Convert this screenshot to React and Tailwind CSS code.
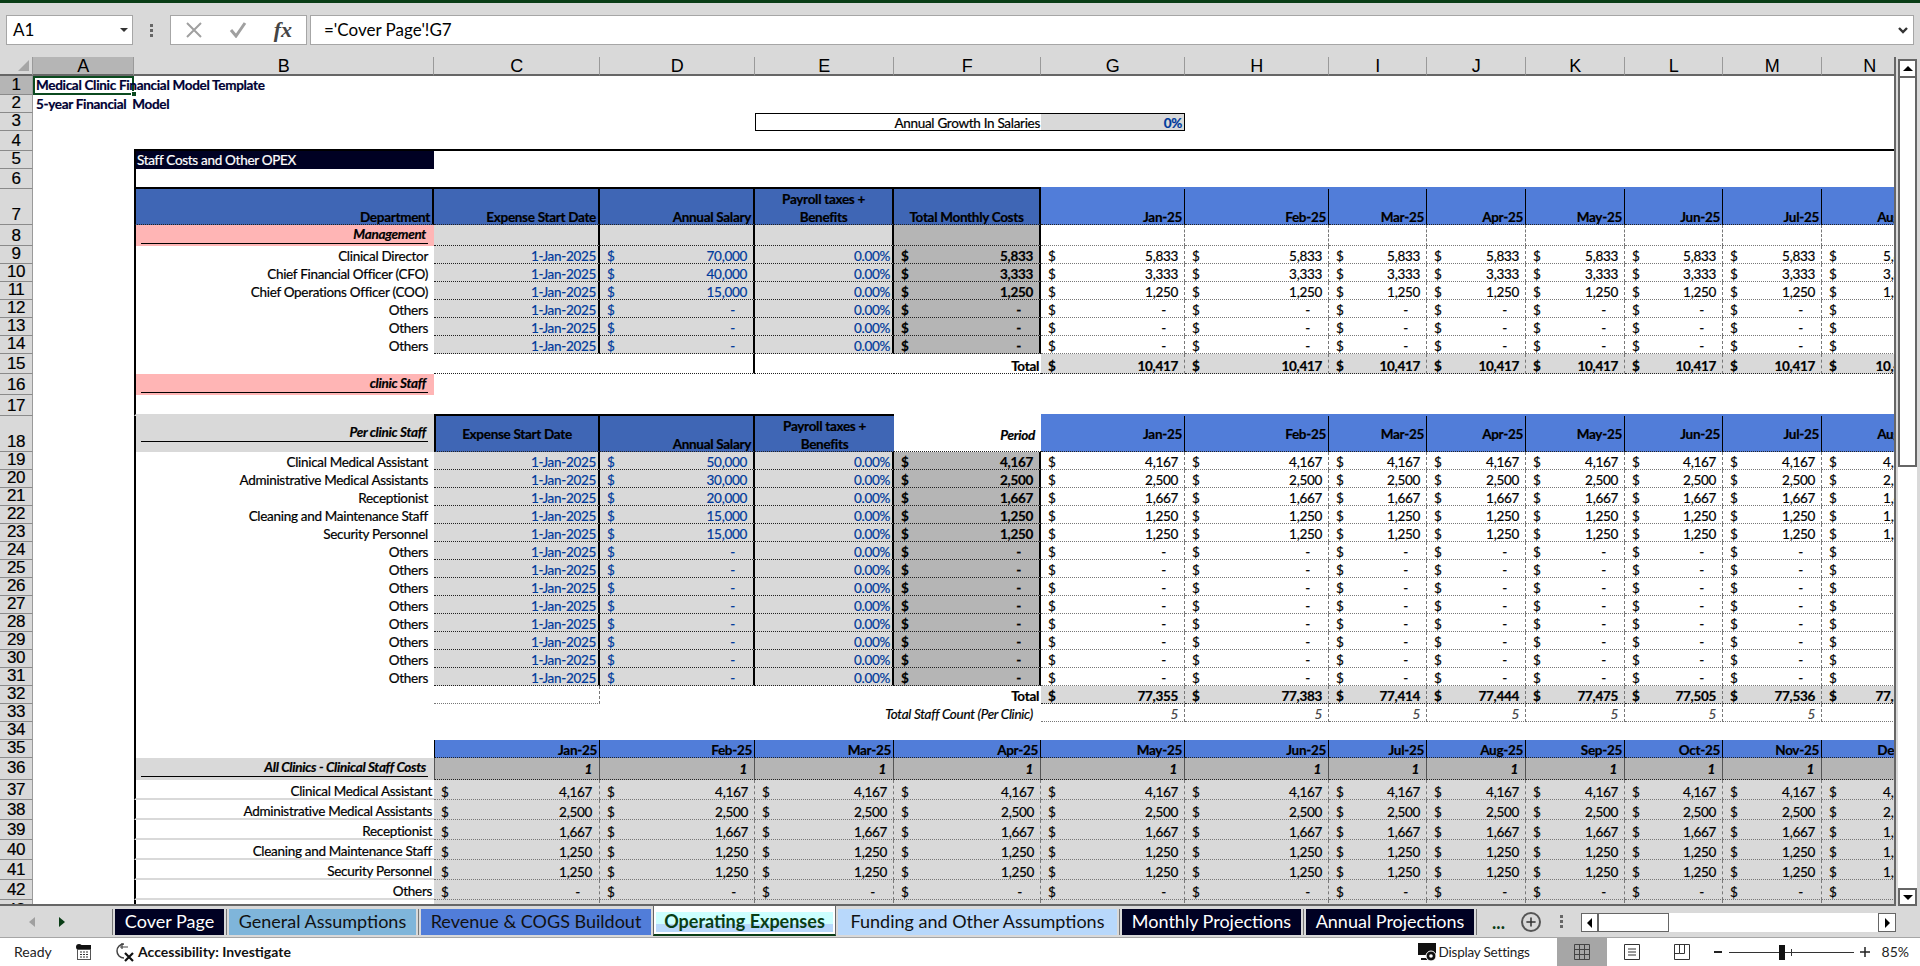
import React from 'react'
import { Plus } from 'lucide-react'

const COLS = ['w-[101px]', 'w-[300px]', 'w-[166px]', 'w-[155px]', 'w-[139px]', 'w-[147px]', 'w-[144px]', 'w-[144px]', 'w-[98px]', 'w-[99px]', 'w-[99px]', 'w-[98px]', 'w-[99px]', 'w-[101px]']
const LETTERS = 'ABCDEFGHIJKLMN'.split('')
const MONTHS = ['Jan-25', 'Feb-25', 'Mar-25', 'Apr-25', 'May-25', 'Jun-25', 'Jul-25', 'Aug-25']
const YEAR = ['Jan-25', 'Feb-25', 'Mar-25', 'Apr-25', 'May-25', 'Jun-25', 'Jul-25', 'Aug-25', 'Sep-25', 'Oct-25', 'Nov-25', 'Dec-25']
const GRID = [6, 7, 8, 9, 10, 11, 12, 13]

const BLUE = 'bg-[#3f66b5]'
const LIGHT = 'bg-[#517dd9]'
const GRAY = 'bg-[#d9d9d9]'
const DARK = 'bg-[#b5b5b5]'
const PINK = 'bg-[#ffb5b5]'
const DOT = 'border-b [border-bottom-style:dotted]! border-b-[#222]'
const DOT2 = 'border-b [border-bottom-style:dotted]! border-b-[#777]'
const DASH = 'border-r [border-right-style:dashed]! border-r-[#777]'
const THICK = 'border-r-2 border-r-black'
const INPUT = 'text-[#003a9b]'
const HEADFONT = "font-['Liberation_Sans',sans-serif] tracking-[-0.5px]"
const S1 = 'translate-y-[1px]'
const S2 = 'translate-y-[2px]'

const Cell = ({ col, className = '', children }) => (
    <div className={`${COLS[col]} shrink-0 box-border flex whitespace-nowrap ${className}`}>{children}</div>
)

const Row = ({ n, h, sel, num = 'items-end pb-[1px]', children }) => (
    <div className={`flex w-max shrink-0 ${h}`}>
        <div className={`w-[33px] shrink-0 box-border border-b border-b-[#8a8a8a] border-r border-r-[#9a9a9a] flex justify-center text-[17px] leading-none ${num} ${HEADFONT} ${sel ? DARK : GRAY}`}>{n}</div>
        <Cell col={0} className={sel ? 'relative' : ''}>
            {sel && <div className="absolute inset-0 border-2 border-[#0b4a1f]"></div>}
            {sel && <div className="absolute right-[-3px] bottom-[-2px] w-[6px] h-[6px] bg-[#0b4a1f] border border-white z-10"></div>}
            {children && children[0]}
        </Cell>
        {children && children.slice(1)}
    </div>
)

const Money = ({ v, bold, cls = '', shift = S1 }) => (
    <div className={`flex-1 flex justify-between items-center pl-[7px] ${shift} ${bold ? 'font-bold' : ''} ${cls}`}>
        <span>$</span>
        <span className={v === '-' ? 'pr-[18px]' : 'pr-[6px]'}>{v}</span>
    </div>
)

const Right = ({ children, className = '', pr = 'pr-[6px]', shift = S1 }) => (
    <div className={`flex-1 min-w-0 flex justify-end ${shift} ${pr} ${className}`}>{children}</div>
)

const SubHead = ({ text, h = 'h-[19px]', pr = 'pr-[2px]' }) => (
    <div className={`ml-[5px] mr-[6px] flex-1 ${h} flex items-end justify-end border-b border-b-black font-bold italic ${pr}`}>{text}</div>
)

const BLeft = 'border-l-2 border-l-black'

const InputRow = ({ n, label, salary, monthly }) => (
    <Row n={n} h="h-[18px]">
        {[
            null,
            <Cell key="b" col={1} className={BLeft}><Right>{label}</Right></Cell>,
            <Cell key="c" col={2} className={`${GRAY} ${DOT} ${THICK}`}><Right pr="pr-[2px]" className={INPUT}>1-Jan-2025</Right></Cell>,
            <Cell key="d" col={3} className={`${GRAY} ${DOT} ${THICK}`}><Money v={salary} cls={INPUT} /></Cell>,
            <Cell key="e" col={4} className={`${GRAY} ${DOT} ${THICK}`}><Right pr="pr-[2px]" className={INPUT}>0.00%</Right></Cell>,
            <Cell key="f" col={5} className={`${DARK} ${DOT} ${THICK}`}><Money v={monthly} bold /></Cell>,
            ...GRID.map(c => <Cell key={c} col={c} className={`${DOT2} ${DASH}`}><Money v={monthly} /></Cell>),
        ]}
    </Row>
)

const ClinicRow = ({ n, label, v, h = 'h-[20px]' }) => (
    <Row n={n} h={h}>
        {[
            null,
            <Cell key="b" col={1} className={`${BLeft} border-b-2 border-b-[#d9d9d9]`}><Right pr="pr-[2px]" shift={S2}>{label}</Right></Cell>,
            ...YEAR.map((m, i) => <Cell key={m} col={i + 2} className={`${GRAY} ${DOT2} ${DASH}`}><Money v={v} shift={S2} cls={i === 0 ? 'pr-[1px]' : ''} /></Cell>),
        ]}
    </Row>
)

const Sep = () => <div className="w-[1px] mx-[2px] h-[26px] mt-[3px] bg-[#777] shrink-0"></div>

const Tab = ({ w, bg, color, children }) => (
    <div className={`${w} ${bg} ${color} h-[26px] mt-[3px] pb-[3px] shrink-0 flex items-center justify-center text-[18px] leading-none whitespace-nowrap`}>{children}</div>
)

const staff = [
    ['Clinical Medical Assistant', '50,000', '4,167'],
    ['Administrative Medical Assistants', '30,000', '2,500'],
    ['Receptionist', '20,000', '1,667'],
    ['Cleaning and Maintenance Staff', '15,000', '1,250'],
    ['Security Personnel', '15,000', '1,250'],
    ['Others', '-', '-'], ['Others', '-', '-'], ['Others', '-', '-'], ['Others', '-', '-'],
    ['Others', '-', '-'], ['Others', '-', '-'], ['Others', '-', '-'], ['Others', '-', '-'],
]

const management = [
    ['Clinical Director', '70,000', '5,833'],
    ['Chief Financial Officer (CFO)', '40,000', '3,333'],
    ['Chief Operations Officer (COO)', '15,000', '1,250'],
    ['Others', '-', '-'], ['Others', '-', '-'], ['Others', '-', '-'],
]

const totals = ['77,355', '77,383', '77,414', '77,444', '77,475', '77,505', '77,536', '77,566']

const App = () => {
    return (
        <div className="w-[1920px] h-[966px] flex flex-col overflow-hidden bg-[#d9d9d9] text-[13.5px] tracking-[-0.3px] leading-[18px] text-black font-['Lato','Liberation_Sans',sans-serif]">
            <div className="h-[3px] bg-[#0a3d16] shrink-0"></div>

            {/* formula bar */}
            <div className="h-[54px] shrink-0 flex items-start pt-[12px] pl-[6px] tracking-normal">
                <div className="w-[127px] h-[30px] box-border bg-white border border-[#a6a6a6] flex items-center pl-[6px] text-[17px] relative">
                    A1
                    <div className="absolute left-[113px] top-[12px] w-0 h-0 border-x-[4px] border-x-transparent border-t-[4px] border-t-[#333]"></div>
                </div>
                <div className="w-[37px] h-[30px] flex flex-col items-center justify-center gap-[2px]">
                    <div className="w-[3px] h-[3px] bg-[#666]"></div>
                    <div className="w-[3px] h-[3px] bg-[#666]"></div>
                    <div className="w-[3px] h-[3px] bg-[#666]"></div>
                </div>
                <div className="w-[137px] h-[30px] box-border bg-white border border-[#a6a6a6] flex items-center justify-between pl-[15px] pr-[14px]">
                    <svg width="16" height="16" viewBox="0 0 16 16"><path d="M1 1 L15 15 M15 1 L1 15" stroke="#a0a0a0" strokeWidth="2" fill="none" /></svg>
                    <svg width="18" height="16" viewBox="0 0 18 16"><path d="M2 8 L7 14 L16 1" stroke="#a0a0a0" strokeWidth="3" fill="none" /></svg>
                    <span className="font-['Liberation_Serif',serif] italic font-bold text-[22px] leading-none text-[#444]">fx</span>
                </div>
                <div className="w-[1604px] ml-[3px] h-[30px] box-border bg-white border border-[#a6a6a6] flex items-center pl-[13px] pr-[5px] justify-between text-[17px]">
                    <span>='Cover Page'!G7</span>
                    <svg width="10" height="7" viewBox="0 0 10 7"><path d="M1 1 L5 5 L9 1" stroke="#333" strokeWidth="2.4" fill="none" /></svg>
                </div>
            </div>

            {/* grid */}
            <div className="flex-1 min-h-0 flex">
                <div className="w-[1896px] shrink-0 box-border border-r-2 border-r-[#666] border-b-2 border-b-[#666] overflow-hidden flex flex-col">
                    <div className="flex w-max h-[19px] shrink-0 items-stretch">
                        <div className="w-[33px] shrink-0 box-border border-b-2 border-b-[#666] border-r border-r-[#9a9a9a] flex items-end justify-end pr-[3px] pb-[3px]">
                            <div className="w-0 h-0 border-l-[11px] border-l-transparent border-b-[11px] border-b-[#a6a6a6]"></div>
                        </div>
                        {LETTERS.map((l, i) => (
                            <Cell key={l} col={i} className={`justify-center items-center text-[18px] ${HEADFONT} border-b-2 border-b-[#666] border-r border-r-[#9a9a9a] ${i === 0 ? DARK : ''} ${i === 13 ? 'pr-[5px]' : ''}`}>{l}</Cell>
                        ))}
                    </div>

                    <div className="flex-1 min-h-0 bg-white overflow-hidden flex flex-col [-webkit-text-stroke:0.2px]">
                        <Row n={1} h="h-[19px]" sel>
                            {[<span key="t" className="pl-[3px] font-bold text-[#000033] relative z-10">Medical Clinic Financial Model Template</span>]}
                        </Row>
                        <Row n={2} h="h-[18px]">
                            {[<span key="t" className="pl-[3px] font-bold text-[#000033]">5-year Financial&nbsp; Model</span>]}
                        </Row>
                        <Row n={3} h="h-[18px]">
                            {[
                                null,
                                <Cell key="b" col={1} />, <Cell key="c" col={2} />, <Cell key="d" col={3} />,
                                <Cell key="e" col={4} className="border border-r-0 border-black" />,
                                <Cell key="f" col={5} className="border-y border-black"><Right pr="pr-[1px]" shift="">Annual Growth In Salaries</Right></Cell>,
                                <Cell key="g" col={6} className={`${GRAY} border border-l-0 border-black`}><Right pr="pr-[2px]" shift="" className={`${INPUT} font-bold`}>0%</Right></Cell>,
                            ]}
                        </Row>
                        <Row n={4} h="h-[20px]">
                            {[null, ...LETTERS.slice(1).map((l, i) => <Cell key={l} col={i + 1} className="border-b-2 border-b-black" />)]}
                        </Row>
                        <Row n={5} h="h-[18px]">
                            {[
                                null,
                                <Cell key="b" col={1} className={`${BLeft} bg-[#000123] text-white pl-[1px]`}>Staff Costs and Other OPEX</Cell>,
                            ]}
                        </Row>
                        <Row n={6} h="h-[20px]">
                            {[
                                null,
                                <Cell key="b" col={1} className={`${BLeft} border-b-2 border-b-black`} />,
                                ...[2, 3, 4, 5].map(c => <Cell key={c} col={c} className="border-b-2 border-b-black" />),
                                ...GRID.map(c => <Cell key={c} col={c} className="border-b-2 border-b-[#517dd9]" />),
                            ]}
                        </Row>
                        <Row n={7} h="h-[36px]">
                            {[
                                null,
                                <Cell key="b" col={1} className={`${BLeft} ${BLUE} ${THICK} ${DOT} items-end font-bold`}><Right pr="pr-[2px]" shift={S2}>Department</Right></Cell>,
                                <Cell key="c" col={2} className={`${BLUE} ${THICK} ${DOT} items-end font-bold`}><Right pr="pr-[2px]" shift={S2}>Expense Start Date</Right></Cell>,
                                <Cell key="d" col={3} className={`${BLUE} ${THICK} ${DOT} items-end font-bold`}><Right pr="pr-[2px]" shift={S2}>Annual Salary</Right></Cell>,
                                <Cell key="e" col={4} className={`${BLUE} ${THICK} ${DOT} items-end justify-center text-center font-bold whitespace-normal`}><div className={S2}>Payroll taxes +<br />Benefits</div></Cell>,
                                <Cell key="f" col={5} className={`${BLUE} ${THICK} ${DOT} items-end justify-center font-bold`}><div className={S2}>Total Monthly Costs</div></Cell>,
                                ...GRID.map((c, i) => <Cell key={c} col={c} className={`${LIGHT} border-r border-r-black ${DOT} items-end font-bold`}><Right pr="pr-[2px]" shift={S2}>{MONTHS[i]}</Right></Cell>),
                            ]}
                        </Row>
                        <Row n={8} h="h-[21px]">
                            {[
                                null,
                                <Cell key="b" col={1} className={`${BLeft} ${PINK}`}><SubHead text="Management" /></Cell>,
                                <Cell key="c" col={2} className={`${GRAY} ${DOT} ${THICK}`} />,
                                <Cell key="d" col={3} className={`${GRAY} ${DOT} ${THICK}`} />,
                                <Cell key="e" col={4} className={`${GRAY} ${DOT} ${THICK}`} />,
                                <Cell key="f" col={5} className={`${DARK} ${DOT} ${THICK}`} />,
                                ...GRID.map(c => <Cell key={c} col={c} className={`${DOT2} ${DASH}`} />),
                            ]}
                        </Row>
                        {management.map((m, i) => <InputRow key={i} n={9 + i} label={m[0]} salary={m[1]} monthly={m[2]} />)}
                        <Row n={15} h="h-[20px]">
                            {[
                                null,
                                <Cell key="b" col={1} className={BLeft} />,
                                <Cell key="c" col={2} className={DOT} />,
                                <Cell key="d" col={3} className={`${DOT} ${THICK}`} />,
                                <Cell key="e" col={4} className={DOT} />,
                                <Cell key="f" col={5} className={`${DOT} items-center font-bold`}><Right pr="pr-[2px]" shift={S2}>Total</Right></Cell>,
                                ...GRID.map(c => <Cell key={c} col={c} className={`${GRAY} ${DOT} ${DASH}`}><Money v="10,417" bold shift={S2} /></Cell>),
                            ]}
                        </Row>
                        <Row n={16} h="h-[21px]">
                            {[null, <Cell key="b" col={1} className={`${BLeft} ${PINK}`}><SubHead text="clinic Staff" /></Cell>]}
                        </Row>
                        <Row n={17} h="h-[21px]">
                            {[
                                null,
                                <Cell key="b" col={1} className={`${BLeft} border-b-2 border-b-[#d9d9d9]`} />,
                                ...[2, 3, 4].map(c => <Cell key={c} col={c} className="border-b-2 border-b-black" />),
                                <Cell key="f" col={5} />,
                                ...GRID.map(c => <Cell key={c} col={c} className="border-b-2 border-b-[#517dd9]" />),
                            ]}
                        </Row>
                        <Row n={18} h="h-[36px]">
                            {[
                                null,
                                <Cell key="b" col={1} className={`${BLeft} ${GRAY}`}><SubHead text="Per clinic Staff" h="h-[26px]" /></Cell>,
                                <Cell key="c" col={2} className={`${BLUE} border-l-2 border-l-black ${THICK} ${DOT} items-center justify-center font-bold`}>Expense Start Date</Cell>,
                                <Cell key="d" col={3} className={`${BLUE} ${THICK} ${DOT} items-end font-bold`}><Right pr="pr-[2px]" shift={S2}>Annual Salary</Right></Cell>,
                                <Cell key="e" col={4} className={`${BLUE} ${DOT} items-end justify-center text-center font-bold whitespace-normal`}><div className={S2}>Payroll taxes +<br />Benefits</div></Cell>,
                                <Cell key="f" col={5} className={`${DOT} items-center font-bold italic`}><Right>Period</Right></Cell>,
                                ...GRID.map((c, i) => <Cell key={c} col={c} className={`${LIGHT} border-r border-r-black ${DOT} items-center font-bold`}><Right pr="pr-[2px]" shift="">{MONTHS[i]}</Right></Cell>),
                            ]}
                        </Row>
                        {staff.map((m, i) => <InputRow key={i} n={19 + i} label={m[0]} salary={m[1]} monthly={m[2]} />)}
                        <Row n={32} h="h-[18px]">
                            {[
                                null,
                                <Cell key="b" col={1} className={BLeft} />,
                                <Cell key="c" col={2} className={`${DOT2} ${DASH}`} />,
                                <Cell key="d" col={3} />,
                                <Cell key="e" col={4} />,
                                <Cell key="f" col={5} className="font-bold"><Right pr="pr-[2px]">Total</Right></Cell>,
                                ...GRID.map((c, i) => <Cell key={c} col={c} className={`${GRAY} ${DOT} ${DASH}`}><Money v={totals[i]} bold /></Cell>),
                            ]}
                        </Row>
                        <Row n={33} h="h-[18px]">
                            {[
                                null,
                                <Cell key="b" col={1} className={BLeft} />,
                                <Cell key="c" col={2} />,
                                <Cell key="d" col={3} />,
                                <Cell key="e" col={4} />,
                                <Cell key="f" col={5} className="italic"><Right pr="pr-[8px]">Total Staff Count (Per Clinic)</Right></Cell>,
                                ...GRID.map(c => <Cell key={c} col={c} className={`${DOT2} ${DASH} italic text-[#444]`}><Right>5</Right></Cell>),
                            ]}
                        </Row>
                        <Row n={34} h="h-[18px]">
                            {[null, <Cell key="b" col={1} className={BLeft} />]}
                        </Row>
                        <Row n={35} h="h-[18px]">
                            {[
                                null,
                                <Cell key="b" col={1} className={BLeft} />,
                                ...YEAR.map((m, i) => <Cell key={m} col={i + 2} className={`${LIGHT} border-r border-r-black ${i === 0 ? 'border-l border-l-black' : ''} ${DOT} font-bold`}><Right pr="pr-[2px]">{m}</Right></Cell>),
                            ]}
                        </Row>
                        <Row n={36} h="h-[22px]" num="items-start pt-[1px]">
                            {[
                                null,
                                <Cell key="b" col={1} className={`${BLeft} ${GRAY}`}><SubHead text="All Clinics - Clinical Staff Costs" /></Cell>,
                                ...YEAR.map((m, i) => <Cell key={m} col={i + 2} className={`${DARK} border-r border-r-[#555] ${i === 0 ? 'border-l border-l-[#555]' : ''} ${DOT} italic font-bold items-center`}><Right pr="pr-[7px]" shift="">1</Right></Cell>),
                            ]}
                        </Row>
                        <ClinicRow n={37} label="Clinical Medical Assistant" v="4,167" />
                        <ClinicRow n={38} label="Administrative Medical Assistants" v="2,500" />
                        <ClinicRow n={39} label="Receptionist" v="1,667" />
                        <ClinicRow n={40} label="Cleaning and Maintenance Staff" v="1,250" />
                        <ClinicRow n={41} label="Security Personnel" v="1,250" />
                        <ClinicRow n={42} label="Others" v="-" />
                        <ClinicRow n={43} label="" v="" />
                    </div>
                </div>

                {/* vertical scrollbar */}
                <div className="ml-[2px] mt-[2px] w-[19px] shrink-0 bg-white flex flex-col">
                    <div className="h-[19px] shrink-0 box-border border-2 border-[#666] flex items-center justify-center">
                        <div className="w-0 h-0 border-x-[5px] border-x-transparent border-b-[5px] border-b-black"></div>
                    </div>
                    <div className="h-[389px] shrink-0 box-border border-2 border-t-0 border-[#666]"></div>
                    <div className="flex-1"></div>
                    <div className="h-[18px] shrink-0 box-border border-2 border-[#666] flex items-center justify-center">
                        <div className="w-0 h-0 border-x-[5px] border-x-transparent border-t-[5px] border-t-black"></div>
                    </div>
                </div>
            </div>

            {/* sheet tabs */}
            <div className="h-[32px] shrink-0 flex border-b border-b-[#a6a6a6] tracking-normal">
                <div className="w-[112px] shrink-0 flex items-center pl-[29px] gap-[24px]">
                    <div className="w-0 h-0 border-y-[5px] border-y-transparent border-r-[6px] border-r-[#a0a0a0]"></div>
                    <div className="w-0 h-0 border-y-[5px] border-y-transparent border-l-[6px] border-l-[#0a3d16]"></div>
                </div>
                <div className="w-[1px] h-[26px] mt-[3px] mr-[2px] bg-[#777] shrink-0"></div>
                <Tab w="w-[109px]" bg="bg-[#000123]" color="text-white">Cover Page</Tab>
                <Sep />
                <Tab w="w-[187px]" bg="bg-[#7fb5da]" color="text-[#111]">General Assumptions</Tab>
                <Sep />
                <Tab w="w-[230px]" bg="bg-[#517dd9]" color="text-[#111]">Revenue &amp; COGS Buildout</Tab>
                <div className="w-[183px] h-[30px] ml-[2px] shrink-0 box-border bg-white border-x border-x-[#666] border-b-2 border-b-[#0a3d16] flex justify-center pt-[6px] px-[2px]">
                    <div className="flex-1 h-[20px] pb-[2px] bg-[linear-gradient(#ccffff_58%,#b8d8fb_58%)] flex items-center justify-center text-[18px] leading-none font-bold whitespace-nowrap text-[#0a3d16]">Operating Expenses</div>
                </div>
                <div className="w-[2px] shrink-0"></div>
                <Tab w="w-[279px]" bg="bg-[#b8d8fb]" color="text-[#111]">Funding and Other Assumptions</Tab>
                <Sep />
                <Tab w="w-[179px]" bg="bg-[#000123]" color="text-white">Monthly Projections</Tab>
                <Sep />
                <Tab w="w-[168px]" bg="bg-[#000123]" color="text-white">Annual Projections</Tab>
                <Sep />
                <div className="w-[39px] shrink-0 text-center text-[18px] text-[#0a3d16] leading-[32px] font-bold">...</div>
                <div className="w-[20px] h-[20px] mt-[6px] ml-[3px] shrink-0 rounded-full border-2 border-[#555] flex items-center justify-center">
                    <Plus size={14} strokeWidth={2.6} color="#333" />
                </div>
                <div className="w-[40px] shrink-0 flex flex-col items-center justify-center gap-[2px]">
                    <div className="w-[3px] h-[3px] bg-[#666]"></div>
                    <div className="w-[3px] h-[3px] bg-[#666]"></div>
                    <div className="w-[3px] h-[3px] bg-[#666]"></div>
                </div>
                <div className="w-[315px] h-[19px] mt-[7px] shrink-0 bg-white flex">
                    <div className="w-[18px] shrink-0 box-border border border-[#666] border-r-2 flex items-center justify-center">
                        <div className="w-0 h-0 border-y-[5px] border-y-transparent border-r-[5px] border-r-black"></div>
                    </div>
                    <div className="w-[70px] shrink-0 box-border border-y border-r border-[#666]"></div>
                    <div className="flex-1"></div>
                    <div className="w-[18px] shrink-0 box-border border border-[#666] flex items-center justify-center">
                        <div className="w-0 h-0 border-y-[5px] border-y-transparent border-l-[5px] border-l-black"></div>
                    </div>
                </div>
            </div>

            {/* status bar */}
            <div className="h-[28px] shrink-0 bg-white flex items-center text-[#222] tracking-normal">
                <div className="ml-[14px] w-[62px] text-[14px]">Ready</div>
                <svg width="16" height="16" viewBox="0 0 16 16" className="shrink-0">
                    <circle cx="3" cy="3" r="3" fill="#111" />
                    <rect x="3" y="1" width="12" height="4" fill="#111" />
                    <rect x="1.5" y="5.5" width="13" height="10" fill="none" stroke="#555" />
                    <path d="M4 8h2M7 8h2M10 8h2M4 10.5h2M7 10.5h2M10 10.5h2M4 13h2M7 13h2M10 13h2" stroke="#333" />
                </svg>
                <svg width="20" height="20" viewBox="0 0 20 20" className="ml-[23px] shrink-0">
                    <path d="M9 2 A7 7 0 1 0 9 16" fill="none" stroke="#444" strokeWidth="1.5" />
                    <path d="M7 1 V7 M5 5 L13 5" stroke="#444" strokeWidth="1.2" fill="none" />
                    <path d="M10 11 L18 19 M18 11 L10 19" stroke="#111" strokeWidth="2.2" fill="none" />
                </svg>
                <div className="ml-[3px] font-bold text-[14px] text-[#111]">Accessibility: Investigate</div>
                <div className="ml-auto flex items-center h-full">
                    <svg width="20" height="20" viewBox="0 0 20 20" className="shrink-0">
                        <rect x="0" y="1" width="18" height="12" fill="#111" />
                        <rect x="3" y="16" width="6" height="2" fill="#111" />
                        <circle cx="13" cy="14" r="5" fill="#111" stroke="#fff" strokeWidth="1" />
                        <circle cx="13" cy="14" r="1.8" fill="#fff" />
                    </svg>
                    <div className="ml-[1px] w-[118px] text-[13.5px] tracking-[-0.2px]">Display Settings</div>
                    <div className="w-[50px] h-full bg-[#a6a6a6] flex items-center justify-center">
                        <svg width="16" height="16" viewBox="0 0 16 16"><path d="M.5.5h15v15H.5zM5.5.5v15M10.5.5v15M.5 5.5h15M.5 10.5h15" fill="none" stroke="#444" /></svg>
                    </div>
                    <div className="w-[50px] flex items-center justify-center">
                        <svg width="16" height="16" viewBox="0 0 16 16"><path d="M.5.5h15v15H.5zM4 5h8M4 8h8M4 11h8" fill="none" stroke="#333" /></svg>
                    </div>
                    <div className="w-[50px] flex items-center justify-center">
                        <svg width="16" height="16" viewBox="0 0 16 16"><path d="M.5.5h15v15H.5zM5.5.5v9h5v-9M.5 9.5h5" fill="none" stroke="#333" /></svg>
                    </div>
                    <div className="w-[8px] h-[2px] bg-[#222] ml-[7px]"></div>
                    <div className="relative w-[125px] h-[1px] bg-[#333] ml-[7px]">
                        <div className="absolute left-[50px] top-[-7px] w-[6px] h-[15px] bg-[#111]"></div>
                        <div className="absolute left-[62px] top-[-3px] w-[1px] h-[7px] bg-[#333]"></div>
                    </div>
                    <svg width="10" height="10" viewBox="0 0 10 10" className="ml-[6px]"><path d="M0 5h10M5 0v10" stroke="#222" strokeWidth="1.5" /></svg>
                    <div className="ml-[12px] mr-[11px] text-[14px]">85%</div>
                </div>
            </div>
        </div>
    )
}

export default App
